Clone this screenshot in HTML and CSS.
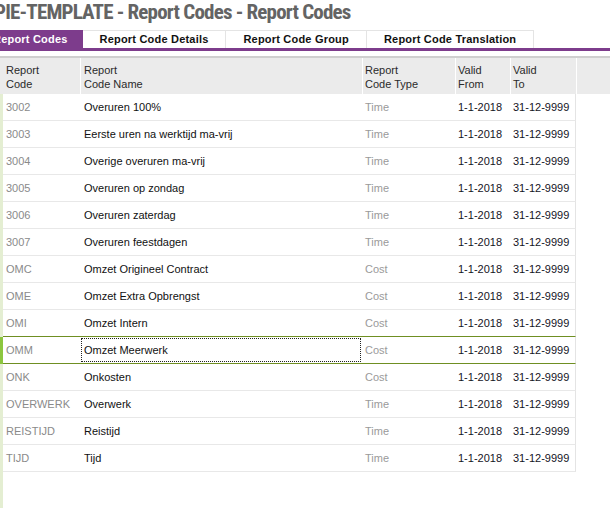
FILE: index.html
```html
<!DOCTYPE html>
<html>
<head>
<meta charset="utf-8">
<link rel="stylesheet" href="styles.css">
</head>
<body>
<h1 class="title">PIE-TEMPLATE - Report Codes - Report Codes</h1>
<div class="tabs">
  <div class="tab active">Report Codes</div>
  <div class="tab">Report Code Details</div>
  <div class="tab">Report Code Group</div>
  <div class="tab">Report Code Translation</div>
</div>
<div class="grid">
  <div class="ghead">
    <div class="hc c1">Report<br>Code</div>
    <div class="hc c2">Report<br>Code Name</div>
    <div class="hc c3">Report<br>Code Type</div>
    <div class="hc c4">Valid<br>From</div>
    <div class="hc c5">Valid<br>To</div>
    <div class="hc c6"></div>
  </div>
  <div class="gbody">
    <div class="row"><div class="cell code">3002</div><div class="cell name">Overuren 100%</div><div class="cell type">Time</div><div class="cell date">1-1-2018</div><div class="cell date">31-12-9999</div></div>
    <div class="row"><div class="cell code">3003</div><div class="cell name">Eerste uren na werktijd ma-vrij</div><div class="cell type">Time</div><div class="cell date">1-1-2018</div><div class="cell date">31-12-9999</div></div>
    <div class="row"><div class="cell code">3004</div><div class="cell name">Overige overuren ma-vrij</div><div class="cell type">Time</div><div class="cell date">1-1-2018</div><div class="cell date">31-12-9999</div></div>
    <div class="row"><div class="cell code">3005</div><div class="cell name">Overuren op zondag</div><div class="cell type">Time</div><div class="cell date">1-1-2018</div><div class="cell date">31-12-9999</div></div>
    <div class="row"><div class="cell code">3006</div><div class="cell name">Overuren zaterdag</div><div class="cell type">Time</div><div class="cell date">1-1-2018</div><div class="cell date">31-12-9999</div></div>
    <div class="row"><div class="cell code">3007</div><div class="cell name">Overuren feestdagen</div><div class="cell type">Time</div><div class="cell date">1-1-2018</div><div class="cell date">31-12-9999</div></div>
    <div class="row"><div class="cell code">OMC</div><div class="cell name">Omzet Origineel Contract</div><div class="cell type">Cost</div><div class="cell date">1-1-2018</div><div class="cell date">31-12-9999</div></div>
    <div class="row"><div class="cell code">OME</div><div class="cell name">Omzet Extra Opbrengst</div><div class="cell type">Cost</div><div class="cell date">1-1-2018</div><div class="cell date">31-12-9999</div></div>
    <div class="row pre-sel"><div class="cell code">OMI</div><div class="cell name">Omzet Intern</div><div class="cell type">Cost</div><div class="cell date">1-1-2018</div><div class="cell date">31-12-9999</div></div>
    <div class="row selected"><div class="cell code">OMM</div><div class="cell name focus">Omzet Meerwerk</div><div class="cell type">Cost</div><div class="cell date">1-1-2018</div><div class="cell date">31-12-9999</div></div>
    <div class="row"><div class="cell code">ONK</div><div class="cell name">Onkosten</div><div class="cell type">Cost</div><div class="cell date">1-1-2018</div><div class="cell date">31-12-9999</div></div>
    <div class="row"><div class="cell code">OVERWERK</div><div class="cell name">Overwerk</div><div class="cell type">Time</div><div class="cell date">1-1-2018</div><div class="cell date">31-12-9999</div></div>
    <div class="row"><div class="cell code">REISTIJD</div><div class="cell name">Reistijd</div><div class="cell type">Time</div><div class="cell date">1-1-2018</div><div class="cell date">31-12-9999</div></div>
    <div class="row"><div class="cell code">TIJD</div><div class="cell name">Tijd</div><div class="cell type">Time</div><div class="cell date">1-1-2018</div><div class="cell date">31-12-9999</div></div>
  </div>
</div>
</body>
</html>
```
FILE: styles.css
```css
html, body {
  margin: 0;
  padding: 0;
  height: 100%;
  overflow: hidden;
  background: #fff;
}
body {
  display: flex;
  flex-direction: column;
  font-family: "Liberation Sans", Arial, sans-serif;
  font-size: 11px;
  color: #1a1a1a;
}
.title {
  margin: 0;
  height: 30px;
  margin-left: -6px;
  font-family: "Roboto", sans-serif;
  font-stretch: condensed;
  font-weight: bold;
  font-size: 21px;
  letter-spacing: -0.8px;
  line-height: 24px;
  color: #646464;
  white-space: nowrap;
}
.tabs {
  display: flex;
  margin-left: -21px;
  border-bottom: 3px solid #7d3c8c;
  height: 18px;
}
.tab {
  box-sizing: border-box;
  height: 18px;
  line-height: 17px;
  padding: 0 17px;
  font-weight: bold;
  letter-spacing: 0.2px;
  color: #111;
  border: 1px solid #e4e4e4;
  border-left: none;
  border-bottom: none;
  background: #fff;
  white-space: nowrap;
}
.tab.active {
  background: #7d3c8c;
  color: #fff;
  border-color: #7d3c8c;
  padding: 0 14px 0 14px;
}
.grid {
  flex: 1;
  display: flex;
  flex-direction: column;
  margin-top: 5px;
}
.ghead {
  display: grid;
  grid-template-columns: 80px 282px 93px 55px 66px 1fr;
  border-top: 2px solid #cfcfcf;
  background: #ebebeb;
  height: 36px;
}
.hc {
  padding: 5px 0 0 6px;
  line-height: 14px;
  color: #2a2a2a;
  border-left: 1px solid #fff;
}
.hc.c1 { border-left: none; }
.hc.c2 { padding-left: 3px; }
.hc.c3, .hc.c4, .hc.c5 { padding-left: 2px; }
.gbody {
  flex: 1;
  border-left: 3px solid #e4eed2;
}
.row {
  display: grid;
  grid-template-columns: 77px 282px 93px 55px 66px;
  width: 573px;
  height: 27px;
  box-sizing: border-box;
  border-bottom: 1px solid #e8e8e8;
  border-right: 1px solid #e4e4e4;
}
.row.pre-sel {
  border-bottom: 1px solid #6f8f22;
}
.row.selected {
  border-bottom: 1px solid #6f8f22;
  box-shadow: -3px 0 0 #8cc63f;
}
.cell {
  line-height: 26px;
  padding-left: 3px;
  white-space: nowrap;
  overflow: hidden;
}
.cell.code { color: #8a8a8a; }
.cell.name { color: #111; padding-left: 4px; }
.cell.type { color: #9a9a9a; }
.cell.date { color: #14141e; }
.cell.focus {
  outline: 1px dotted #222;
  outline-offset: -2px;
}
```
